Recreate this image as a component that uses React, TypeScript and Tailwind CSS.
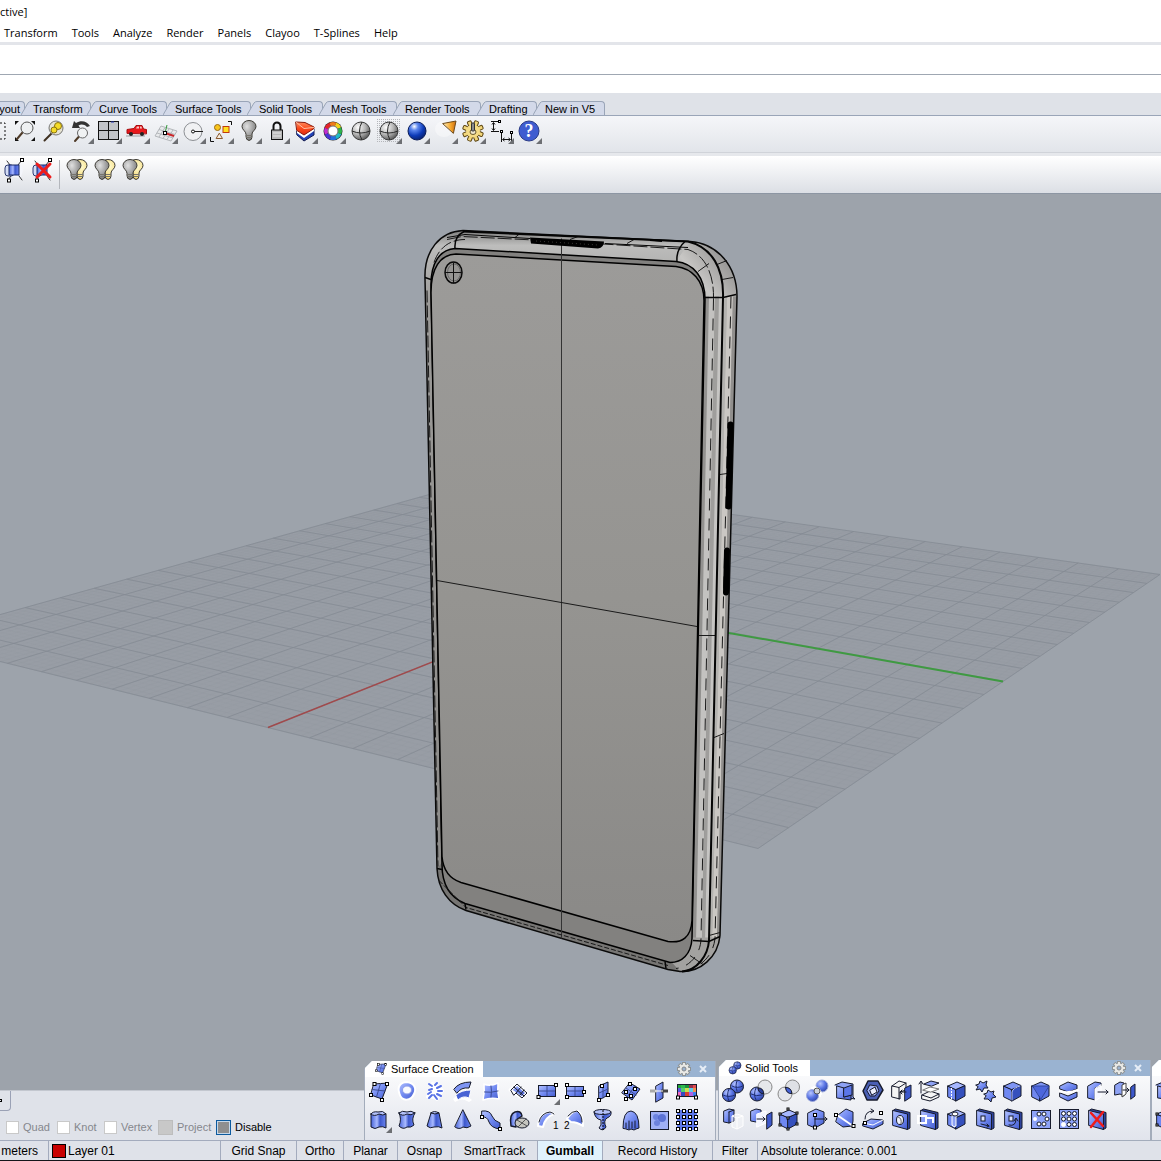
import React from "react";

type Pt = [number, number];
type Tool = { name: string; art: React.ReactNode; more?: boolean };

/* ---------- shared drawing pieces ---------- */

const K = "#171b2c";

const SharedDefs = () => (
  <svg className="absolute h-0 w-0" aria-hidden="true">
    <defs>
      <linearGradient id="blue" x1="0" y1="0" x2="1" y2="1">
        <stop offset="0" stopColor="#b3c2ff" />
        <stop offset="0.5" stopColor="#738bf2" />
        <stop offset="1" stopColor="#425bcc" />
      </linearGradient>
      <linearGradient id="blueH" x1="0" y1="0" x2="1" y2="0">
        <stop offset="0" stopColor="#4763d8" />
        <stop offset="0.4" stopColor="#a9baff" />
        <stop offset="0.6" stopColor="#3d58cc" />
        <stop offset="1" stopColor="#6d86f0" />
      </linearGradient>
      <radialGradient id="blueBall" cx="0.35" cy="0.3" r="0.8">
        <stop offset="0" stopColor="#b9c7ff" />
        <stop offset="0.5" stopColor="#5873e4" />
        <stop offset="1" stopColor="#2a3f9c" />
      </radialGradient>
      <radialGradient id="deepBall" cx="0.35" cy="0.25" r="0.85">
        <stop offset="0" stopColor="#ffffff" />
        <stop offset="0.25" stopColor="#5b86ee" />
        <stop offset="0.6" stopColor="#0d3bb8" />
        <stop offset="1" stopColor="#061a5c" />
      </radialGradient>
      <radialGradient id="grayBall" cx="0.35" cy="0.3" r="0.8">
        <stop offset="0" stopColor="#ffffff" />
        <stop offset="0.5" stopColor="#b5b5b5" />
        <stop offset="1" stopColor="#454545" />
      </radialGradient>
      <radialGradient id="grayBulb" cx="0.35" cy="0.3" r="0.8">
        <stop offset="0" stopColor="#e0e0e0" />
        <stop offset="0.6" stopColor="#9c9c9c" />
        <stop offset="1" stopColor="#707070" />
      </radialGradient>
      <radialGradient id="goldBulb" cx="0.6" cy="0.35" r="0.8">
        <stop offset="0" stopColor="#fffbd0" />
        <stop offset="0.7" stopColor="#f6dc80" />
        <stop offset="1" stopColor="#c79a32" />
      </radialGradient>
      <linearGradient id="cone" x1="0" y1="0" x2="1" y2="0">
        <stop offset="0" stopColor="#fff3c0" />
        <stop offset="0.6" stopColor="#f6a62a" />
        <stop offset="1" stopColor="#c86a10" />
      </linearGradient>
      <linearGradient id="red" x1="0" y1="0" x2="0" y2="1">
        <stop offset="0" stopColor="#ff8a5c" />
        <stop offset="0.5" stopColor="#fa4a1c" />
        <stop offset="1" stopColor="#e02810" />
      </linearGradient>
      <pattern id="dots" width="2" height="2" patternUnits="userSpaceOnUse">
        <rect width="1" height="1" fill="#b4b6ba" />
      </pattern>
    </defs>
  </svg>
);

const Sq = ({ p }: { p: Pt[] }) => (
  <>
    {p.map(([x, y], i) => (
      <rect key={i} x={x - 1.5} y={y - 1.5} width="3" height="3" fill="#fff" stroke="#000" strokeWidth="1" />
    ))}
  </>
);

const P = ({ d, f = "none", s = K, w = 1 }: { d: string; f?: string; s?: string; w?: number }) => (
  <path d={d} fill={f} stroke={s} strokeWidth={w} strokeLinejoin="round" strokeLinecap="round" />
);

const Cube = ({ left = "#6f88f2", right = "#3550bd", top = "#a6b7ff" }) => (
  <>
    <P d="M5 9 13 12.500V24L5 20Z" f={left} />
    <P d="M13 12.500 22 8.500V19L13 24Z" f={right} />
    <P d="M5 9 14 5 22 8.500 13 12.500Z" f={top} />
  </>
);

/* flat upright slab seen from the left, with a thin shaded edge */
const Slab = ({ children }: { children?: React.ReactNode }) => (
  <>
    <P d="M6 5.500 8.500 4 23 7.500 23 23 20.500 24.500Z" f="#2d429c" />
    <P d="M6 5.500 20.500 9V24.500L6 20.500Z" f="url(#blue)" />
    {children}
  </>
);

const Globe = ({ r = 9, fill = "url(#grayBall)" }) => (
  <>
    <circle cx="14" cy="14" r={r} fill={fill} stroke="#3a3a3a" />
    <path d={`M${14 - r} 14Q14 18 ${14 + r} 14M15 ${14 - r}Q10 14 15 ${14 + r}`} fill="none" stroke="#2b2b2b" />
  </>
);

const Bulb = ({ x, fill }: { x: number; fill: string }) => (
  <g transform={`translate(${x} 0)`}>
    <P d="M-3 17C-3 14-7 13-7 9.500A7 6 0 0 1 7 9.500C7 13 3 14 3 17V20Q3 23 0 23.500Q-3 23-3 20Z" f={fill} s="#3c3a34" />
    <P d="M-2.500 18.500H2.500M-2.500 20.500H2.500" s="#77756c" />
  </g>
);

const RedX = () => <P d="M8 8 20 21M20 7 8 22" s="#ee1c1c" w={2.500} />;

const ArtTile = ({ tool }: { tool: Tool }) => (
  <button type="button" title={tool.name} aria-label={tool.name} className="h-7 w-7 shrink-0 hover:bg-[#dbe6f6]">
    <svg viewBox="0 0 28 28" className="block h-7 w-7">
      {tool.art}
      {tool.more && <path d="M27 21V27H21Z" fill="#6d6f73" />}
    </svg>
  </button>
);

/* ---------- top toolbar ---------- */

const ringColors = ["#f3d21b", "#ef7a1a", "#e4262b", "#c32bd0", "#4a35d6", "#2370e0", "#22b9c6", "#2eb44a"];

const mainTools: Tool[] = [
  {
    name: "Zoom window",
    art: <path d="M5 6H22V22H5" fill="none" stroke="#111" strokeDasharray="2 2" />,
  },
  {
    name: "Zoom extents",
    art: (
      <>
        <path d="M4 4H8L4 8ZM24 4H20L24 8ZM4 24H8L4 20ZM24 24H20L24 20Z" fill="#111" />
        <P d="M11.500 15.500 6 22" w={2} s="#4f3b28" />
        <circle cx="16" cy="11" r="6" fill="#eef0f2" stroke="#555" />
      </>
    ),
  },
  {
    name: "Zoom selected",
    art: (
      <>
        <P d="M13 16 5.500 23.500" w={2} s="#3f3020" />
        <circle cx="17" cy="11" r="7" fill="#e6e3d2" stroke="#777" />
        <circle cx="19" cy="9" r="3.500" fill="#f5dc28" stroke="#8b7410" />
        <circle cx="15" cy="13" r="3" fill="#f5dc28" stroke="#8b7410" />
      </>
    ),
  },
  {
    name: "Undo view change",
    more: true,
    art: (
      <>
        <path d="M5 11 7 4 9 6C14 3 20 4 23 9L20 10C17 7 14 7 11.500 8.500L13 11Z" fill="#333" />
        <P d="M12 19.500 8 24" w={2} s="#4f3b28" />
        <circle cx="15.500" cy="16" r="5" fill="#f0f2f3" stroke="#666" />
      </>
    ),
  },
  {
    name: "Four viewports",
    more: true,
    art: (
      <>
        <rect x="3.500" y="4.500" width="20" height="18" fill="#c2c4c8" stroke="#111" />
        <path d="M13.500 4V23M3 13.500H24" stroke="#111" />
        <path d="M16 5H19" stroke="#2333b0" />
      </>
    ),
  },
  {
    name: "Named views",
    more: true,
    art: (
      <>
        <path d="M3 19H22" stroke="#9a9da3" />
        <P d="M4 16V12.500L11 11.500 13 8.500H19L20.500 12 23.500 12.500V16.500Z" f="#e8181c" s="#a80d10" />
        <path d="M13 11.500 14 9.500H16V11.500ZM17 9.500H18.500L19 11.500H17Z" fill="#f3c9c9" />
        <circle cx="8" cy="17" r="2" fill="#222" />
        <circle cx="19" cy="17" r="2" fill="#222" />
      </>
    ),
  },
  {
    name: "Set CPlane",
    more: true,
    art: (
      <>
        <path d="M4 19 10 9 26 14 20 24ZM8 20 14 10.500M12 21.500 18 12M16 22.500 22 13M6 16 22 21M8 12.500 24 17.500" fill="#e8eaec" stroke="#b4b7bb" />
        <path d="M14 16 16 8" stroke="#32973a" />
        <path d="M14 16 23 19" stroke="#c8262a" strokeWidth="2" />
        <rect x="12.500" y="14.500" width="3" height="3" fill="#fff" stroke="#000" />
      </>
    ),
  },
  {
    name: "Object snap",
    more: true,
    art: (
      <>
        <circle cx="14" cy="14.500" r="9" fill="#f0f1f3" stroke="#8d9094" />
        <path d="M14 14.500H24" stroke="#222" />
        <circle cx="14" cy="14.500" r="1.500" fill="#fff" stroke="#111" />
      </>
    ),
  },
  {
    name: "Select objects",
    more: true,
    art: (
      <>
        <path d="M21 4.500H24.500V8M3.500 20V24.500H7" fill="none" stroke="#111" />
        <circle cx="10.500" cy="10.500" r="3" fill="#f8c51c" stroke="#9a6a10" />
        <rect x="16" y="9.500" width="6" height="6" fill="#ffe01f" stroke="#c03a10" />
        <P d="M12.500 16.500 15.500 21.500H9.500Z" f="#f6ece0" s="#8a5a30" />
      </>
    ),
  },
  { name: "Hide objects", more: true, art: <Bulb x={14} fill="url(#grayBulb)" /> },
  {
    name: "Lock objects",
    more: true,
    art: (
      <>
        <path d="M10.500 13V9A3.500 3.500 0 0 1 17.500 9V13" fill="none" stroke="#111" strokeWidth="2" />
        <rect x="8.500" y="13" width="11" height="9.500" fill="#b9b9b9" stroke="#111" />
        <path d="M10 16H18M10 19H18" stroke="#e8e8e8" />
      </>
    ),
  },
  {
    name: "Layers",
    more: true,
    art: (
      <>
        <P d="M6 14 13 19 23 12V18L13 24 6 18Z" f="#2444b8" s="#141c50" />
        <path d="M6 13 13 18 23 11V14L13 21 6 16Z" fill="#fff" />
        <P d="M5 5 14 5.500 23 10V11.500L13 18 6 13.500Z" f="url(#red)" s="#8a1a0c" />
        <P d="M5.500 5.500 13 11.500 22.500 10.500" s="#ffc0a4" />
      </>
    ),
  },
  {
    name: "Object properties",
    more: true,
    art: (
      <>
        <circle cx="14" cy="14" r="9.500" fill="#222" />
        {ringColors.map((c, i) => (
          <circle
            key={c}
            cx="14"
            cy="14"
            r="7"
            fill="none"
            stroke={c}
            strokeWidth="4"
            strokeDasharray="5.600 50"
            transform={`rotate(${-70 - i * 45} 14 14)`}
          />
        ))}
        <circle cx="14" cy="14" r="5" fill="#fff" stroke="#777" />
      </>
    ),
  },
  { name: "Shade", art: <Globe /> },
  {
    name: "Shaded viewport",
    more: true,
    art: (
      <>
        <rect x="2" y="2" width="24" height="24" fill="url(#dots)" />
        <Globe />
      </>
    ),
  },
  {
    name: "Render",
    more: true,
    art: <circle cx="14" cy="14" r="9" fill="url(#deepBall)" stroke="#0a1c58" />,
  },
  {
    name: "Spotlight",
    more: true,
    art: (
      <>
        <ellipse cx="13" cy="12" rx="9" ry="8" fill="#fff" opacity="0.4" />
        <P d="M12 6.500 25 4 22.500 16Z" f="url(#cone)" s="#6e4a18" />
      </>
    ),
  },
  {
    name: "Options",
    more: true,
    art: (
      <>
        {[0, 45, 90, 135, 180, 225, 270, 315].map((a) => (
          <rect key={a} x="12" y="3.500" width="4" height="5" rx="1" fill="#f3d77a" stroke="#5e4714" transform={`rotate(${a + 22} 14 14)`} />
        ))}
        <ellipse cx="14" cy="14" rx="7" ry="6.500" fill="#f5dc86" />
        <ellipse cx="14" cy="15" rx="3" ry="2.500" fill="#ece4cc" stroke="#6b5a2a" />
        <rect x="12.500" y="6" width="3" height="8" rx="1" fill="#8b8b8b" stroke="#333" />
      </>
    ),
  },
  {
    name: "Dimensions",
    more: true,
    art: (
      <>
        <path d="M4 4.500H12M4 14.500H12M6.500 6V13M5 7.500 6.500 5.500 8 7.500M5 11.500 6.500 13.500 8 11.500M14.500 16V25M24.500 16V25M16 22.500H23M17.500 21 15.500 22.500 17.500 24M21.500 21 23.500 22.500 21.500 24" fill="none" stroke="#111" />
        <rect x="11.500" y="3.500" width="2" height="2" fill="#fff" stroke="#000" />
        <rect x="13.500" y="13.500" width="2" height="2" fill="#fff" stroke="#000" />
        <rect x="23.500" y="14.500" width="2" height="2" fill="#fff" stroke="#000" />
      </>
    ),
  },
  {
    name: "Help",
    more: true,
    art: (
      <>
        <circle cx="14" cy="14" r="10" fill="#3f5cd0" stroke="#2a3b86" />
        <text x="14" y="20" textAnchor="middle" className="fill-white font-['Liberation_Serif',serif] text-[18px] font-bold">
          ?
        </text>
      </>
    ),
  },
];

const Blend = () => (
  <>
    <path d="M19 6Q26 13 20 22L13 21V8Z" fill="#f4f6fb" />
    <P d="M18 9 21.500 4.500M11 20 8 24M19 20 22 24M7 5 10 9" s="#333" />
    <rect x="5" y="9" width="9" height="11" rx="3" fill="#d3dcf6" stroke="#2c3b70" />
    <rect x="9" y="9" width="10" height="10" fill="url(#blueH)" stroke="#1b2a66" />
    <Sq p={[[22, 4], [9, 24.500]]} />
  </>
);

const subTools: Tool[] = [
  { name: "Show edges", art: <Blend /> },
  {
    name: "Hide edges",
    art: (
      <>
        <Blend />
        <P d="M9 8 22 21M22 8 9 21" s="#ee1c1c" w={3} />
      </>
    ),
  },
];

const bulbTools: Tool[] = ["Show objects", "Swap hidden", "Show selected"].map((name) => ({
  name,
  art: (
    <>
      <Bulb x={17} fill="url(#goldBulb)" />
      <Bulb x={11} fill="url(#grayBulb)" />
    </>
  ),
}));

/* ---------- surface panel ---------- */

const surfaceRow1: Tool[] = [
  {
    name: "Surface from corner points",
    art: (
      <>
        <P d="M9 6 23 5 17 21 6 17Z" f="url(#blue)" />
        <P d="M15.500 5.500 11.500 19M7 11.500 20 13" s="#3c4c94" />
        <Sq p={[[9.500, 6], [22, 6], [6, 17], [17, 22]]} />
      </>
    ),
  },
  {
    name: "Surface from planar curves",
    art: (
      <>
        <path d="M14 4C21 5 24 10 21 16C18 23 9 24 6.500 16C4 9 7 4 14 4Z" fill="url(#blue)" stroke="#fff" strokeWidth="2" />
        <ellipse cx="14" cy="12" rx="4.500" ry="4" fill="#f8faff" stroke="#8d9ce8" />
      </>
    ),
  },
  {
    name: "Surface from curve network",
    art: (
      <>
        <P d="M11 5Q19 7 22 13L16 22Q13 19 6 19Z" f="#fff" s="#fff" w={2} />
        <P d="M8 6 11 8M14 7 16 5M16 10 20 8M17 13 21 13M16 16 20 18M13 17 16 21M8 12 11 11M7 16 10 14M8 20 11 17" s="#5872e6" w={2} />
      </>
    ),
  },
  {
    name: "Loft",
    art: (
      <>
        <path d="M4 21Q12 12 23 22L20 24Q13 19 6 24Z" fill="#fff" />
        <P d="M5 11Q10 4 22 4L20 10Q12 9 8 15Z" f="#7e95f4" />
        <P d="M7 17Q12 12 22 12L20 20Q14 17 9 22Z" f="#4a64d4" s="#fff" />
      </>
    ),
  },
  {
    name: "Surface from edges",
    art: (
      <>
        <P d="M7 6Q13 9 21 5Q20 13 22 21Q14 19 6 22Q8 14 7 6Z" f="url(#blue)" s="#fff" w={1.500} />
        <P d="M14 8Q15 13 14 19M7.500 14Q14 15 21 13" s="#3c4c94" />
      </>
    ),
  },
  {
    name: "Patch",
    art: (
      <>
        <P d="M5 12 12 6 22 15 17 20Z" f="url(#blue)" s="#fff" w={3} />
        <P d="M6 12 12 6 22 15 17 20 11 15 9 17ZM9 9 19 18M11 15 16 9M15 17 19 12" />
      </>
    ),
  },
  {
    name: "Rectangular plane",
    more: true,
    art: (
      <>
        <rect x="5.500" y="7.500" width="17" height="11" fill="url(#blue)" stroke={K} />
        <path d="M14 8V18M6 13H22" stroke="#3c4c94" />
        <Sq p={[[5.500, 19], [23, 7]]} />
      </>
    ),
  },
  {
    name: "Plane through three points",
    art: (
      <>
        <rect x="5.500" y="8.500" width="17" height="10" fill="url(#blue)" stroke={K} />
        <path d="M14 9V18M6 13H22" stroke="#3c4c94" />
        <Sq p={[[6, 7], [6, 19], [23, 14]]} />
      </>
    ),
  },
  {
    name: "Vertical plane",
    art: (
      <>
        <P d="M10 8 19 4V17L10 22Z" f="url(#blue)" />
        <P d="M14 6V20M10 15 19 11" s="#3c4c94" />
        <Sq p={[[13, 8], [19, 17], [10, 22]]} />
      </>
    ),
  },
  {
    name: "Plane through points",
    art: (
      <>
        <P d="M13 5 23 11 15 22 5 15Z" f="url(#blue)" />
        <P d="M18 8 10 19M9 10 19 17" s="#3c4c94" />
        <Sq p={[[13, 6], [18, 11], [9, 14], [14, 18], [9, 21]]} />
      </>
    ),
  },
  {
    name: "Cutting plane",
    art: (
      <>
        <P d="M11 8 18 4V20L11 24Z" f="url(#blue)" />
        <path d="M5 13H12" stroke="#aaa" strokeWidth="3" />
        <path d="M16 13H23" stroke="#444" strokeWidth="3" />
        <path d="M10 13H18" stroke="#fff" />
      </>
    ),
  },
  {
    name: "Heightfield from image",
    art: (
      <>
        {["#20a838", "#30b850", "#18933a", "#9a3048", "#e04a50", "#5a58e0", "#50d070", "#c8e050", "#58c8f0", "#f09050", "#f06ac0", "#3848c0", "#d84030", "#b060e0", "#4080f0"].map((c, i) => (
          <rect key={i} x={4 + (i % 5) * 4} y={6 + Math.floor(i / 5) * 4} width="4" height="4" fill={c} />
        ))}
        <rect x="4.500" y="6.500" width="19" height="12" fill="none" stroke={K} />
        <Sq p={[[5, 19.500], [23, 19.500]]} />
      </>
    ),
  },
];

const surfaceRow2: Tool[] = [
  {
    name: "Extrude straight",
    more: true,
    art: (
      <>
        <P d="M6 8V21Q10 24 14 21Q18 20 21 22V8Z" f="url(#blueH)" />
        <P d="M6 8Q8 5 13 6Q18 4 21 8Q18 10 14 8Q9 11 6 8Z" f="#b3c1fa" />
      </>
    ),
  },
  {
    name: "Extrude along curve",
    art: (
      <>
        <P d="M6 7Q9 13 6 20Q10 24 14 21Q18 22 21 19Q18 13 22 7Z" f="url(#blueH)" />
        <P d="M6 7Q9 4 14 6Q18 4 22 7Q18 10 14 8Q9 11 6 7Z" f="#b3c1fa" />
      </>
    ),
  },
  {
    name: "Extrude tapered",
    art: (
      <>
        <P d="M10 7 6 20Q9 23 13 21Q18 20 21 22L18 7Z" f="url(#blueH)" />
        <P d="M10 7Q13 4 18 7Q14 9 10 7Z" f="#b3c1fa" />
      </>
    ),
  },
  { name: "Extrude to point", art: <P d="M14 4 22 20Q18 23 14 21Q10 24 6 21Z" f="url(#blueH)" /> },
  {
    name: "Ribbon",
    art: (
      <>
        <P d="M5 5Q13 4 15 10Q17 15 23 17V23Q14 22 12 16Q10 10 5 11Z" f="url(#blue)" />
        <Sq p={[[5, 11], [23, 23]]} />
      </>
    ),
  },
  {
    name: "Drape over curves",
    art: (
      <>
        <P d="M6 20Q4 8 10 6Q16 4 17 10L11 14V21Z" f="url(#blueH)" w={1.500} />
        <ellipse cx="17" cy="17" rx="7" ry="5" fill="#c5c5bf" stroke={K} />
        <P d="M12 14 22 20M13 21 21 13" s="#555" />
      </>
    ),
  },
  {
    name: "Sweep 1 rail",
    art: (
      <>
        <P d="M5 20Q6 7 17 6L21 8Q12 11 10 21Z" f="url(#blue)" s="#fff" w={2} />
        <P d="M6 16Q8 7 17 6Q20 7 21 8" />
        <text x="20" y="23" className="fill-black font-['Liberation_Sans',sans-serif] text-[10px]">
          1
        </text>
      </>
    ),
  },
  {
    name: "Sweep 2 rails",
    art: (
      <>
        <P d="M6 13Q11 4 17 5Q22 9 22 20Q16 16 10 16Z" f="url(#blue)" s="#fff" w={2} />
        <P d="M7 10Q11 5 16 5Q21 9 21 16" />
        <text x="3" y="23" className="fill-black font-['Liberation_Sans',sans-serif] text-[10px]">
          2
        </text>
      </>
    ),
  },
  {
    name: "Revolve",
    art: (
      <>
        <P d="M5 6Q6 13 12 14Q13 20 10 22Q14 26 17 21Q14 15 18 12Q23 10 22 6Z" f="url(#blueH)" />
        <ellipse cx="13.500" cy="6" rx="8.500" ry="2.500" fill="#b3c1fa" stroke={K} />
        <path d="M14 4V25" stroke="#000" strokeDasharray="2 1" />
      </>
    ),
  },
  {
    name: "Drape",
    art: (
      <>
        <P d="M6 22Q6 5 14 5Q22 6 22 22L19 23 17 24 14 23 12 24 9 23Z" f="url(#blue)" />
        <P d="M9 22V17M12 23V15M15 22V16M18 22V15" />
      </>
    ),
  },
  {
    name: "Heightfield",
    art: (
      <>
        <rect x="5.500" y="5.500" width="18" height="18" fill="#9fb0f6" stroke={K} />
        <circle cx="11" cy="11" r="3" fill="#6c83e0" />
        <circle cx="17" cy="12" r="4" fill="#4a63cc" opacity="0.8" />
        <circle cx="12" cy="17" r="3" fill="#5f77d8" opacity="0.8" />
      </>
    ),
  },
  {
    name: "Surface from point grid",
    art: (
      <>
        <rect x="4" y="4" width="20" height="20" fill="#5d78ea" />
        <Sq p={[5, 11, 17, 23].flatMap((y) => [5, 11, 17, 23].map((x) => [x, y] as Pt))} />
      </>
    ),
  },
];

/* ---------- solid panel ---------- */

const solidRow1: Tool[] = [
  {
    name: "Boolean union",
    art: (
      <>
        <circle cx="18" cy="9.500" r="6.500" fill="url(#blueBall)" stroke={K} />
        <circle cx="10" cy="18" r="6.500" fill="url(#blueBall)" stroke={K} />
        <P d="M4 18Q10 21 16 18M10 12Q7 18 10 24M13 9Q18 12 24 9M18 4Q16 8 18 14" s="#1f2f74" />
      </>
    ),
  },
  {
    name: "Boolean difference",
    art: (
      <>
        <circle cx="10" cy="17" r="7" fill="url(#blueBall)" stroke={K} />
        <P d="M4 17Q9 20 15 18M9 11Q6 17 9 23" s="#1f2f74" />
        <circle cx="18" cy="10" r="7" fill="#dfe1e5" fillOpacity="0.75" stroke="#888" />
        <P d="M11 11Q11 16 16.500 17Q17 11 11 11Z" f="#2a3f9c" />
      </>
    ),
  },
  {
    name: "Boolean intersection",
    art: (
      <>
        <circle cx="17.500" cy="10" r="7" fill="#dfe1e5" stroke="#888" />
        <circle cx="10" cy="17" r="7" fill="#dfe1e5" fillOpacity="0.7" stroke="#888" />
        <P d="M10.500 10.500Q16 10 17 16.500Q11 17 10.500 10.500Z" f="#4763d8" />
      </>
    ),
  },
  {
    name: "Boolean split",
    art: (
      <>
        <circle cx="19" cy="9" r="6" fill="url(#blueBall)" stroke="#9aa7dd" />
        <circle cx="9.500" cy="18.500" r="6" fill="url(#blueBall)" stroke="#9aa7dd" />
        <P d="M9 11Q16 11 17 19" s="#fff" w={2} />
        <P d="M11 10Q17 11 18 17" s="#fff" w={2} />
        <circle cx="14" cy="14" r="3" fill="#cfd3db" stroke="#555" />
      </>
    ),
  },
  {
    name: "Create solid",
    art: (
      <>
        <P d="M4 8 11 5 22 7V20L24 22 18 21" f="#8ea2f4" />
        <P d="M6 9 13 11V20L20 18V23L6 21Z" f="url(#blue)" />
        <P d="M13 11 21 8V18L13 20Z" f="#5b76e8" />
      </>
    ),
  },
  {
    name: "Shell",
    art: (
      <>
        <P d="M9 4 19 4 24 13 18 23 8 23 4 14Z" f="#4a5fb4" w={1.500} />
        <P d="M11 8 18 9 20 14 16 19 11 19 8 14Z" f="#a6b6fa" />
        <P d="M11 13 16 10 18 15 13 18Z" f="#eef1fd" />
      </>
    ),
  },
  {
    name: "Cap planar holes",
    art: (
      <>
        <P d="M5 9 12 4 19 6V13L13 15V22L5 20Z" f="#f5f5f5" />
        <P d="M5 9 12 10.500V22M12 10.500 19 6" />
        <P d="M18 11 24 8V20L18 24Z" f="#3d58cc" />
        <P d="M19 15H13M15 13 13 15 15 17" />
      </>
    ),
  },
  {
    name: "Extract surface",
    art: (
      <>
        <P d="M7 18 15 14 24 17V20L15 24 7 22Z" f="#f5f5f5" />
        <P d="M7 18 16 21 24 17" />
        <P d="M8 13 15 10 24 12 16 15Z" f="#fff" s="#777" />
        <P d="M9 7 16 4 24 6 17 9Z" f="#8ea2f4" />
        <P d="M6 16V5M4 7 6 4 8 7" />
      </>
    ),
  },
  {
    name: "Merge coplanar faces",
    art: (
      <>
        <Cube />
        <path d="M8.500 11V22" stroke="#fff" strokeDasharray="2 1" />
      </>
    ),
  },
  {
    name: "Edit solids",
    art: (
      <>
        <P d="M5 8 8 7 9 4 12 6 16 4 15 8 17 11 13 11 11 15 9 12 5 13 7 10Z" f="url(#blue)" />
        <P d="M13 17 16 16 17 13 20 15 23 14 22 17 25 20 21 21 20 25 17 22 13 22 15 19Z" f="url(#blue)" />
      </>
    ),
  },
  {
    name: "Fillet edges",
    art: (
      <>
        <Cube top="#7f95f4" />
        <P d="M13 23V15Q14 11 21 9" s="#b8c5ff" />
      </>
    ),
  },
  {
    name: "Chamfer edges",
    art: (
      <>
        <Cube left="#6f87f0" right="#5670e2" top="#7f95f4" />
        <P d="M6 9 22 9 14 22Z" f="#4c66dc" s="#31479f" />
      </>
    ),
  },
  {
    name: "Wire cut",
    art: (
      <>
        <P d="M5 9 13 5 22 8V12L13 15 5 12Z" f="url(#blue)" />
        <P d="M5 16 13 19 22 15V20L13 24 5 20Z" f="url(#blue)" />
        <path d="M4 14Q13 17 24 12.500" fill="none" stroke="#fff" strokeWidth="2" />
      </>
    ),
  },
  {
    name: "Extract face",
    art: (
      <>
        <P d="M5 9 12 5 18 6V9L12 11V23L5 21Z" f="url(#blue)" />
        <P d="M18 8V20L12 24V12Z" f="#f4f6ff" s="#fff" />
        <P d="M15 15H25M23 13 25 15 23 17" />
      </>
    ),
  },
  {
    name: "Move face",
    art: (
      <>
        <P d="M4 8 9 5 13 6V19L9 17 4 18Z" f="#8ea2f4" />
        <path d="M11 8V20L15 17V6Z" fill="#fff" stroke="#444" />
        <P d="M12 13H18M16 11 18 13 16 15" />
        <P d="M20 10 24 7V19L20 22Z" f="#3d58cc" />
      </>
    ),
  },
];

const solidRow2: Tool[] = [
  {
    name: "Extend face",
    art: (
      <>
        <P d="M5 6 10 4 15 5V16L10 18 5 17Z" f="url(#blue)" />
        <P d="M10 7V18M10 7 15 5" />
        <path d="M13 11 18 9 24 11V21L18 24 13 22ZM13 11 18 13V24M18 13 24 11" fill="#ffffff55" stroke="#fff" />
      </>
    ),
  },
  {
    name: "Move face to boundary",
    art: (
      <>
        <P d="M4 6 9 4 14 5V18L9 17 4 16Z" f="url(#blue)" />
        <P d="M10 9 19 6V18L10 22Z" f="#f4f6ff" s="#fff" />
        <P d="M20 10 25 7V20L20 24Z" f="#3d58cc" />
        <P d="M10 14H18M16 12 18 14 16 16" />
      </>
    ),
  },
  {
    name: "Solid control points",
    art: (
      <>
        <Cube />
        {[[5, 9], [13, 4], [22, 8], [13, 13], [22, 19], [13, 24], [5, 20]].map(([x, y]) => (
          <rect key={`${x}-${y}`} x={x - 1} y={y - 1} width="2" height="2" fill="#fff" stroke="#000" />
        ))}
      </>
    ),
  },
  {
    name: "Move edge",
    art: (
      <>
        <P d="M5 8 13 4 21 7V18L12 23 5 20Z" f="url(#blue)" />
        <P d="M12 11V23M12 14H24M22 12 24 14 22 16" />
        <Sq p={[[12, 10], [12, 22.500]]} />
      </>
    ),
  },
  {
    name: "Split face",
    art: (
      <>
        <P d="M7 10 15 4 22 7V16L21 21 12 22 5 17Z" f="url(#blue)" />
        <path d="M6 10 22 21" stroke="#fff" strokeWidth="2" />
        <Sq p={[[5, 10], [22.500, 21]]} />
      </>
    ),
  },
  {
    name: "Fold face",
    art: (
      <>
        <P d="M4 18 12 14 24 15V19L14 24 4 21Z" f="url(#blue)" />
        <P d="M4 18 14 20 24 15" s="#fff" />
        <P d="M6 14Q6 6 14 6M12 4 15 6 12 8" />
        <Sq p={[[6, 18], [22, 8]]} />
      </>
    ),
  },
  {
    name: "Round hole",
    art: (
      <Slab>
        <ellipse cx="13" cy="15" rx="3.500" ry="4.500" fill="#eef1fb" stroke={K} />
        <path d="M11 12Q15 13 14 19" fill="none" stroke="#666" />
      </Slab>
    ),
  },
  {
    name: "Place hole",
    art: (
      <Slab>
        <path d="M3 11H11V18H3ZM11 13H18V18" fill="none" stroke="#fff" strokeWidth="2" />
      </Slab>
    ),
  },
  {
    name: "Make hole",
    art: (
      <>
        <Cube />
        <P d="M9 11V20Q11 23 13 21V10" f="#8ea2f4" s="#fff" />
        <ellipse cx="12" cy="9" rx="3" ry="2" fill="#fff" stroke={K} />
      </>
    ),
  },
  {
    name: "Move hole",
    art: (
      <Slab>
        <rect x="10" y="11" width="4" height="5" fill="#dfe5ff" stroke={K} />
        <P d="M10 19 18 21M16 19 18 21 16 22" />
      </Slab>
    ),
  },
  {
    name: "Rotate hole",
    art: (
      <Slab>
        <rect x="10" y="11" width="4" height="5" fill="#dfe5ff" stroke={K} />
        <P d="M10 20Q17 22 17 14M15 16 17 13 19 16" />
      </Slab>
    ),
  },
  {
    name: "Polar hole array",
    art: (
      <>
        <rect x="4.500" y="5.500" width="19" height="18" fill="#8ea3f8" stroke={K} />
        <circle cx="8" cy="14" r="2" fill="#fff" />
        {[[12, 9], [17, 9], [20, 14], [17, 19], [12, 19]].map(([x, y]) => (
          <circle key={`${x}-${y}`} cx={x} cy={y} r="2" fill="#fff" stroke={K} />
        ))}
      </>
    ),
  },
  {
    name: "Hole array",
    art: (
      <>
        <rect x="4.500" y="4.500" width="19" height="19" fill="#8ea3f8" stroke={K} />
        {[8.500, 14, 19.500].flatMap((y) =>
          [8.500, 14, 19.500].map((x) => (
            <circle key={`${x}-${y}`} cx={x} cy={y} r="2" fill="#fff" stroke={x < 9 && y > 19 ? "#fff" : K} />
          )),
        )}
      </>
    ),
  },
  {
    name: "Delete hole",
    art: (
      <Slab>
        <RedX />
      </Slab>
    ),
  },
];

/* ---------- viewport scene ---------- */

const quad: Pt[] = [
  [-89, 639],
  [758, 848],
  [1160, 574],
  [483, 479],
];

const project = (u: number, v: number): Pt => {
  const [[x0, y0], [x1, y1], [x2, y2], [x3, y3]] = quad;
  const dx1 = x1 - x2;
  const dx2 = x3 - x2;
  const dy1 = y1 - y2;
  const dy2 = y3 - y2;
  const sx = x0 - x1 + x2 - x3;
  const sy = y0 - y1 + y2 - y3;
  const det = dx1 * dy2 - dx2 * dy1;
  const g = (sx * dy2 - dx2 * sy) / det;
  const h = (dx1 * sy - sx * dy1) / det;
  const w = g * u + h * v + 1;
  return [
    ((x1 - x0 + g * x1) * u + (x3 - x0 + h * x3) * v + x0) / w,
    ((y1 - y0 + g * y1) * u + (y3 - y0 + h * y3) * v + y0) / w,
  ];
};

const seg = (a: Pt, b: Pt) => `M${a[0].toFixed(1)} ${a[1].toFixed(1)}L${b[0].toFixed(1)} ${b[1].toFixed(1)}`;

const gridPath = (divisions: number) =>
  Array.from({ length: divisions + 1 }, (_, i) => i / divisions)
    .map((t) => seg(project(t, 0), project(t, 1)) + seg(project(0, t), project(1, t)))
    .join("");

/* long shading strips down the right side: [top-left, top-right, bottom-right, bottom-left] x, colour */
const strips: [number, number, number, number, string][] = [
  [705, 709, 696, 692, "#92918f"],
  [709, 715, 702, 696, "#c3c2c0"],
  [715, 719, 705, 702, "#9f9e9c"],
  [719, 723, 709, 705, "#c6c5c3"],
  [723, 727, 712, 709, "#b3b2af"],
  [727, 733, 717, 712, "#cac7c3"],
  [733, 737, 720, 717, "#918f8d"],
];

const Scene = () => (
  <svg viewBox="0 193 1161 897" preserveAspectRatio="xMidYMid slice" className="block min-h-0 w-full flex-1 bg-[#9da3ab]" role="img" aria-label="Perspective viewport">
    <defs>
      <linearGradient id="screen" x1="0" y1="0" x2="0" y2="1">
        <stop offset="0" stopColor="#9c9b99" />
        <stop offset="0.5" stopColor="#959491" />
        <stop offset="1" stopColor="#8a8987" />
      </linearGradient>
      <linearGradient id="body" x1="0" y1="0" x2="0" y2="1">
        <stop offset="0" stopColor="#7f7f7e" />
        <stop offset="0.02" stopColor="#bdbdbc" />
        <stop offset="0.1" stopColor="#9b9a98" />
        <stop offset="1" stopColor="#8b8a88" />
      </linearGradient>
      <linearGradient id="corner" x1="0" y1="1" x2="1" y2="0.3">
        <stop offset="0" stopColor="#9a9998" />
        <stop offset="0.4" stopColor="#c8c7c5" />
        <stop offset="1" stopColor="#8a8988" />
      </linearGradient>
    </defs>

    <path d={seg(quad[0], quad[1]) + "L1160 574L483 479Z"} fill="#959aa1" opacity="0.6" />
    <path d={gridPath(100)} stroke="#8d929a" strokeWidth="1" opacity="0.14" fill="none" />
    <path d={gridPath(20)} stroke="#858b93" strokeWidth="1" opacity="0.8" fill="none" />
    <path d="M574 605 268 727" stroke="#a04a4c" strokeWidth="1.500" />
    <path d="M574 605 1003 681" stroke="#3f9a42" strokeWidth="2" />

    {/* body */}
    <path d="M425 278C424 250 440 231 463 230L690 241C718 243 737 266 737 296L720 935C718 957 700 972 680 971L668 969 466 910C449 904 438 889 437 868Z" fill="url(#body)" />
    <path d="M705 297C704 275 694 263 676 261L690 241C718 243 737 266 737 297Z" fill="url(#corner)" />
    {strips.map(([a, b, c, d, color]) => (
      <path key={a} d={`M${a} 296H${b}L${c} 940H${d}Z`} fill={color} />
    ))}
    <path d="M692 937H720C718 957 700 972 680 971L668 962C683 962 692 952 692 937Z" fill="#a3a2a0" />
    <path d="M437 868C438 889 449 904 466 910L668 969 680 971 672 962 465 903C450 897 442 885 442 862Z" fill="#767573" />
    <path d="M425 278C424 250 440 231 463 230L690 241C718 243 737 266 737 296L720 935C718 957 700 972 680 971L668 969 466 910C449 904 438 889 437 868Z" fill="none" stroke="#0a0a0a" strokeWidth="1.500" />

    {/* front glass and screen */}
    <path d="M431 284C431 262 440 249 455 248L676 261C694 263 705 277 705 299L692 938C691 954 682 962 670 962L465 903C450 897 442 885 442 864Z" fill="#82817f" stroke="#000" strokeWidth="1.500" />
    <path d="M431 292C431 268 440 254 456 253.500L676 266C692 268 704 280 704 300L692 920C691 937 682 943 668 941L461 882C449 878 443 868 442 856Z" fill="url(#screen)" stroke="#000" strokeWidth="1.500" />

    {/* isocurves */}
    <g fill="none" stroke="#1a1a1a" strokeWidth="1">
      <path d="M561.500 238V938" stroke="#333" />
      <path d="M437 580 697 626" />
      <path d="M447 239 462 236 565 241 688 249C706 255 714 275 713.500 298" strokeDasharray="14 3" />
      <path d="M427 290 438 866M434 262C439 247 450 239 465 239" strokeDasharray="12 3" />
      <path d="M713.500 298 701 938C701 951 692 966 676 968" strokeDasharray="12 8" />
      <path d="M731 296 715 938C713 956 700 967 686 970" strokeDasharray="12 8" />
      <path d="M439 880 466 907 668 965" strokeDasharray="5 2" />
      <path d="M698 271 709 263M717 264 727 260M722 279 733 277M699 635H715M714 737 724 733M720 474 727 473M709 935 720 932M690 955 703 964" />
      <path d="M515 237 520 233M627 243 634 239M570 239 578 236" />
    </g>
    <g fill="none" stroke="#050505" strokeWidth="1.500">
      <path d="M463 231 688 241C712 247 724 268 723 297L709 940C708 955 697 970 682 971" strokeWidth="2" />
      <path d="M447 237 465 234 530 238M605 243 688 247" strokeWidth="1" />
      <path d="M455 248Q454 236 464 231M677 261Q676 249 685 241M705 297H723L736 294M425 277 431 279" />
      <path d="M693 940 709 941 720 936M437 868 442 869M465 903 466 909M665 961 666 968" />
    </g>

    {/* speaker grille and side keys */}
    <path d="M530 237 604 241Q604 247 598 248L531 243Z" fill="#000" />
    <path d="M536 240.500 598 244.500" stroke="#3a3936" strokeDasharray="1 3" />
    <path d="M650 239.500 662 240.500" stroke="#000" strokeWidth="2" />
    <path d="M730.500 424 728.500 506" stroke="#000" strokeWidth="6" strokeLinecap="round" />
    <path d="M727 550 726 592" stroke="#000" strokeWidth="6" strokeLinecap="round" />

    {/* punch-hole camera */}
    <ellipse cx="453.500" cy="272" rx="8.500" ry="10.500" fill="#969593" stroke="#0a0a0a" strokeWidth="1.500" />
    <ellipse cx="454" cy="272" rx="6.500" ry="8.500" fill="none" stroke="#666" />
    <path d="M453.500 262V283M445 272H462" stroke="#111" />
  </svg>
);

/* ---------- chrome ---------- */

const menus = ["Transform", "Tools", "Analyze", "Render", "Panels", "Clayoo", "T-Splines", "Help"];

const tabs = [
  { label: "Transform", width: "w-[70px]" },
  { label: "Curve Tools", width: "w-[80px]" },
  { label: "Surface Tools", width: "w-[88px]" },
  { label: "Solid Tools", width: "w-[76px]" },
  { label: "Mesh Tools", width: "w-[78px]" },
  { label: "Render Tools", width: "w-[88px]" },
  { label: "Drafting", width: "w-[60px]" },
  { label: "New in V5", width: "w-[72px]" },
];

const ToolTabs = () => (
  <div role="tablist" className="flex h-[23px] shrink-0 items-end overflow-hidden border-b border-[#9aa5b8] bg-[#dfe2e8] text-[11px]">
    <button role="tab" type="button" className="flex h-3.5 w-[25px] shrink-0 items-center justify-end rounded-tr border-t border-r border-[#9aa5b8] bg-[#d3d9e9] pt-0.5 pr-1">
      yout
    </button>
    {tabs.map((t) => (
      <button key={t.label} role="tab" type="button" className={`relative -ml-1 flex h-3.5 shrink-0 whitespace-nowrap ${t.width}`}>
        <svg viewBox="0 0 10 14" className="h-3.5 w-2.5 shrink-0">
          <path d="M0 14 7 2Q8 0.500 10 0.500V14Z" fill="#d3d9e9" />
          <path d="M0 14 7 2Q8 0.500 10 0.500" fill="none" stroke="#9aa5b8" />
        </svg>
        <span className="flex h-full flex-1 items-center rounded-tr border-t border-r border-[#9aa5b8] bg-[#d3d9e9] pt-0.5 pl-0.5">{t.label}</span>
      </button>
    ))}
  </div>
);

const Gear = () => (
  <svg viewBox="0 0 14 14" className="h-3.5 w-3.5">
    {[0, 45, 90, 135, 180, 225, 270, 315].map((a) => (
      <rect key={a} x="5.500" y="0.500" width="3" height="4" fill="#e9e9e6" stroke="#8f9496" transform={`rotate(${a} 7 7)`} />
    ))}
    <circle cx="7" cy="7" r="4.500" fill="#e9e9e6" />
    <circle cx="7" cy="7" r="2" fill="#9bb3d0" stroke="#85888a" />
  </svg>
);

type PanelProps = { name: string; title?: string; icon: React.ReactNode; rows: Tool[][]; className: string; tabWidth: string };

const Panel = ({ name, title, icon, rows, className, tabWidth }: PanelProps) => (
  <section aria-label={name} className={`shrink-0 border-r border-b border-l border-[#a3acbb] bg-linear-to-b from-white to-[#e1e4ec] [clip-path:polygon(8px_0,100%_0,100%_100%,0_100%,0_8px)] ${className}`}>
    <header className="mb-px flex h-4 items-center bg-[#9ab3d1]">
      <h2 className={`flex h-full items-center gap-0.5 bg-white pl-2 text-[11px] whitespace-nowrap ${tabWidth}`}>
        <svg viewBox="0 0 28 28" className="h-4 w-4">
          {icon}
        </svg>
        {title}
      </h2>
      <div className="ml-auto flex items-center gap-2 pr-2">
        <button type="button" aria-label={`${name} options`}>
          <Gear />
        </button>
        <button type="button" aria-label={`Close ${name}`}>
          <svg viewBox="0 0 8 8" className="h-2 w-2">
            <path d="M1 1 7 7M7 1 1 7" stroke="#e6edf6" strokeWidth="2" />
          </svg>
        </button>
      </div>
    </header>
    {rows.map((row, i) => (
      <div key={i} className="flex">
        {row.map((tool) => (
          <ArtTile key={tool.name} tool={tool} />
        ))}
      </div>
    ))}
  </section>
);

const snaps = [
  { label: "Quad", width: "w-[51px]", look: "h-[13px] w-[13px] border-[#c9c9c9] bg-white" },
  { label: "Knot", width: "w-[47px]", look: "h-[13px] w-[13px] border-[#c9c9c9] bg-white" },
  { label: "Vertex", width: "w-[54px]", look: "h-[13px] w-[13px] border-[#c9c9c9] bg-white" },
  { label: "Project", width: "w-[58px]", look: "h-[15px] w-[15px] border-[#bdbdbd] bg-[#c8c8c8]" },
];

const statusCells = [
  { label: "Grid Snap", cls: "w-[76px]" },
  { label: "Ortho", cls: "w-[47px]" },
  { label: "Planar", cls: "w-[54px]" },
  { label: "Osnap", cls: "w-[54px]" },
  { label: "SmartTrack", cls: "w-[86px]" },
  { label: "Gumball", cls: "w-[65px] bg-[#e1f2fc] font-bold" },
  { label: "Record History", cls: "w-[110px]" },
  { label: "Filter", cls: "w-[45px]" },
];

export default function App() {
  return (
    <div className="relative flex h-screen flex-col overflow-hidden bg-[#dfe2e9] font-['Liberation_Sans',Arial,sans-serif] text-black">
      <SharedDefs />

      <header className="shrink-0 bg-white font-['Open_Sans','Noto_Sans',sans-serif]">
        <h1 className="h-6 text-[11px] leading-6">ctive]</h1>
        <nav aria-label="Main menu" className="flex h-[18px] gap-3.5 pl-1 text-[11px] leading-[18px]">
          {menus.map((m) => (
            <button key={m} type="button">
              {m}
            </button>
          ))}
        </nav>
      </header>

      <div className="shrink-0 border-t-[3px] border-[#e3e5ea] bg-white">
        <input aria-label="Command history" readOnly className="block h-[30px] w-full border-b border-[#9fa7b2] bg-white px-1 text-[11px] outline-none" />
        <input aria-label="Command" className="block h-[18px] w-full bg-white px-1 text-[11px] outline-none" />
      </div>

      <ToolTabs />

      <div role="toolbar" aria-label="Standard" className="flex h-[37px] shrink-0 overflow-hidden border-b border-[#d0d3d9] bg-linear-to-b from-[#f5f6f9] to-[#e2e5ea] pt-px">
        <div className="-ml-[17px] flex">
          {mainTools.map((t) => (
            <ArtTile key={t.name} tool={t} />
          ))}
        </div>
      </div>
      <div role="toolbar" aria-label="Visibility" className="flex h-[41px] shrink-0 overflow-hidden border-t-[3px] border-b border-t-[#e6e8ec] border-b-[#8d96a3] bg-linear-to-b from-white to-[#dcdfe5]">
        {subTools.map((t) => (
          <ArtTile key={t.name} tool={t} />
        ))}
        <div className="mx-[3px] my-1 w-px bg-[#b4b7bd]" />
        {bulbTools.map((t) => (
          <ArtTile key={t.name} tool={t} />
        ))}
      </div>

      <Scene />

      <div className="h-[50px] shrink-0 border-t border-[#c3c7cf]">
        <div className="flex h-5 w-[11px] items-center rounded-br border-r border-b border-[#9aa1b5]">
          <span className="h-[3px] w-0.5 border-y border-r border-black" />
        </div>
        <div className="mt-[9px] flex h-[15px] items-center pl-1.5 text-[11px] text-[#85878d]">
          {snaps.map((s) => (
            <label key={s.label} className={`flex shrink-0 items-center gap-1 ${s.width}`}>
              <input type="checkbox" disabled className={`shrink-0 appearance-none border ${s.look}`} />
              {s.label}
            </label>
          ))}
          <label className="flex items-center gap-1 text-black">
            <input type="checkbox" defaultChecked className="h-[15px] w-[15px] appearance-none border border-[#0c5a9e] bg-[#e3eef8] checked:bg-[#8f8f8f] checked:shadow-[inset_0_0_0_1px_#c5d8ea]" />
            Disable
          </label>
        </div>
      </div>

      <footer className="flex h-[21px] shrink-0 items-stretch overflow-hidden border-t border-b border-t-[#a3abbd] border-b-[#15151a] text-[12px] whitespace-nowrap">
        <div className="flex w-[49px] shrink-0 items-center justify-end border-r border-[#a3abbd] pr-2.5">meters</div>
        <button type="button" className="flex w-[172px] shrink-0 items-center gap-0.5 border-r border-[#a3abbd] pl-[3px]">
          <span className="h-3.5 w-3.5 border border-black bg-[#c80000]" />
          Layer 01
        </button>
        {statusCells.map((c) => (
          <button key={c.label} type="button" className={`shrink-0 border-r border-[#a3abbd] text-center ${c.cls}`}>
            {c.label}
          </button>
        ))}
        <div className="flex items-center pl-[3px]">Absolute tolerance: 0.001</div>
      </footer>

      {/* floating tool windows over the lower edge of the viewport */}
      <div className="absolute bottom-5 left-[364px] flex items-end">
        <Panel name="Surface Creation" title="Surface Creation" icon={surfaceRow1[0].art} rows={[surfaceRow1, surfaceRow2]} className="h-[80px] w-[352px]" tabWidth="w-[118px]" />
        <Panel name="Solid Tools" title="Solid Tools" icon={solidRow1[0].art} rows={[solidRow1, solidRow2]} className="ml-0.5 h-[81px] w-[433px]" tabWidth="w-[91px]" />
        <Panel name="Mesh Tools" icon={solidRow1[0].art} rows={[[solidRow1[4], solidRow1[5]], [solidRow2[2]]]} className="h-[81px] w-[200px]" tabWidth="w-[91px]" />
      </div>
    </div>
  );
}
